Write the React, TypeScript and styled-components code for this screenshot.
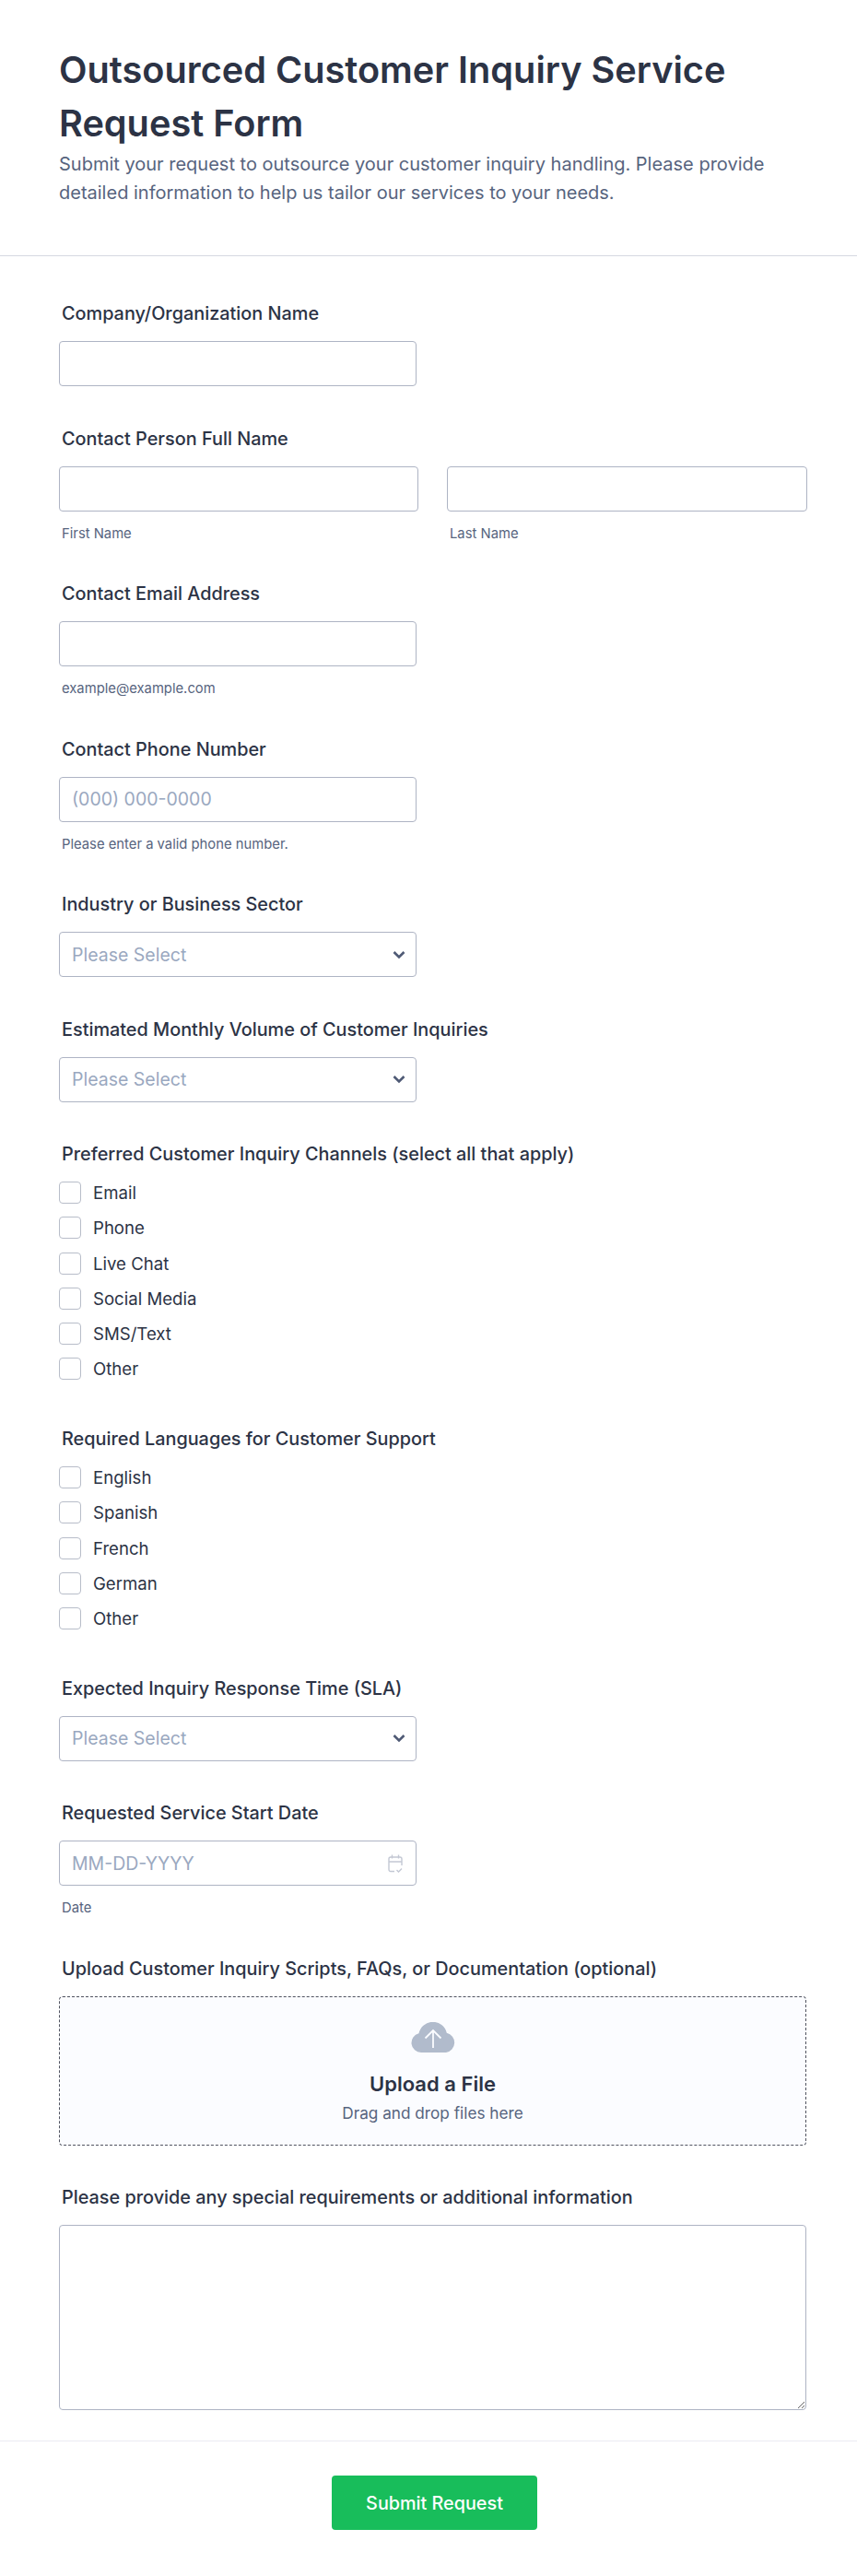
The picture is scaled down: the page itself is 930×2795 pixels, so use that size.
import React from "react";
import styled, { createGlobalStyle } from "styled-components";

const Global = createGlobalStyle`
  html, body { margin: 0; padding: 0; background: #fff; }
  * { box-sizing: border-box; }
  body { font-family: Inter, "Liberation Sans", sans-serif; color: #2c3345; }
`;

const Page = styled.form`
  width: 930px;
  height: 2795px;
  overflow: hidden;
  background: #fff;
  display: flex;
  flex-direction: column;
`;

const Header = styled.header`
  flex: none;
  height: 278px;
  padding: 47px 64px 0;
  border-bottom: 1px solid #d5d8e1;
`;

const Title = styled.h1`
  margin: 0;
  font-size: 39.7px;
  line-height: 58px;
  font-weight: 600;
  color: #2c3345;
`;

const Subtitle = styled.p`
  margin: 0;
  font-size: 20px;
  line-height: 31px;
  font-weight: 400;
  color: #57647e;
`;

const Body = styled.div`
  flex: none;
  padding: 50px 54px 0 64px;
  display: flex;
  flex-direction: column;
`;

const Section = styled.section`
  margin-bottom: 44.5px;
  &:last-child { margin-bottom: 20px; }
`;

const Label = styled.label`
  display: block;
  margin: 0 0 18px 3px;
  font-size: 19.85px;
  line-height: 24px;
  font-weight: 500;
  color: #2c3345;
`;

const Row = styled.div`
  display: grid;
  grid-template-columns: 390px 391px;
  gap: 31px;
`;

const controlBase = `
  display: block;
  height: 49px;
  border: 1px solid #aeb4c4;
  border-radius: 4px;
  background: #fff;
  font-family: Inter, "Liberation Sans", sans-serif;
  font-size: 19.5px;
  color: #9aa8bf;
  outline: none;
`;

const TextInput = styled.input<{ $full?: boolean }>`
  ${controlBase}
  width: ${(p) => (p.$full ? "100%" : "388px")};
  padding: 0 13px;
  &::placeholder { color: #9aa8bf; opacity: 1; }
`;

const SubLabel = styled.div`
  margin: 15px 0 0 3px;
  font-size: 14.8px;
  line-height: 18px;
  color: #57647e;
`;

const FieldWrap = styled.div`
  position: relative;
  width: 388px;
`;

const Select = styled.select`
  ${controlBase}
  width: 100%;
  padding: 0 13px;
  appearance: none;
`;

const OverIcon = styled.span<{ $right: number }>`
  position: absolute;
  right: ${(p) => p.$right}px;
  top: 50%;
  transform: translateY(-50%);
  display: flex;
  pointer-events: none;
`;

const CheckList = styled.div`
  display: flex;
  flex-direction: column;
  gap: 14.3px;
  margin: 2px 0 7px;
`;

const CheckRow = styled.label`
  display: flex;
  align-items: center;
  gap: 13px;
  height: 24px;
  font-size: 18.6px;
  color: #2c3345;
`;

const CheckBox = styled.input.attrs({ type: "checkbox" })`
  appearance: none;
  width: 24px;
  height: 24px;
  margin: 0;
  border: 1px solid #b8bdc9;
  border-radius: 4px;
  background: #fff;
`;

const Drop = styled.div`
  height: 162px;
  width: 811px;
  border: 1px dashed #50535f;
  border-radius: 4px;
  background: #fbfcff;
  display: flex;
  flex-direction: column;
  align-items: center;
  padding-top: 27px;
`;

const DropTitle = styled.div`
  margin-top: 19px;
  font-size: 22px;
  line-height: 30px;
  font-weight: 600;
  color: #2c3345;
`;

const DropSub = styled.div`
  margin-top: 5px;
  font-size: 17.2px;
  line-height: 24px;
  color: #57647e;
`;

const TextArea = styled.textarea`
  ${controlBase}
  width: 811px;
  height: 201px;
  padding: 8px 12px;
`;

const Footer = styled.footer`
  flex: none;
  margin-top: auto;
  height: 147px;
  border-top: 1px solid #eaebf2;
  display: flex;
  justify-content: center;
  padding: 37px 0 0 13px;
`;

const Submit = styled.button`
  width: 223px;
  height: 59px;
  border: none;
  border-radius: 4px;
  background: #18bd5b;
  color: #fff;
  font-family: Inter, "Liberation Sans", sans-serif;
  font-size: 19.8px;
  font-weight: 500;
`;

const Chevron = () => (
  <svg width="14" height="10" viewBox="0 0 14 10" fill="none">
    <path d="M1.500 2l5.500 5.500L12.500 2" stroke="#4f5a75" strokeWidth="2.600" />
  </svg>
);

const CalendarIcon = () => (
  <svg width="16" height="20" viewBox="0 0 16 20" fill="none" stroke="#c3c8d4" strokeWidth="1.400">
    <path d="M7 18.500H3A2 2 0 0 1 1 16.500V5A2 2 0 0 1 3 3H13A2 2 0 0 1 15 5V12" />
    <path d="M1 8H15M4.500 .500V4.500M11.500 .500V4.500" />
    <path d="M9.500 17l2 2 3.500-3.500" />
  </svg>
);

const CloudIcon = () => (
  <svg width="48" height="33" viewBox="0 0 48 33">
    <path
      d="M11 33A10.500 10.500 0 0 1 8.500 12.300 15.500 15.500 0 0 1 38.800 11.800 10.800 10.800 0 0 1 38 33Z"
      fill="#b1bbcc"
    />
    <path d="M24 28V9M15.500 17.500L24 9l8.500 8.500" fill="none" stroke="#fbfcff" strokeWidth="1.800" />
  </svg>
);

const SelectField = ({ label }: { label: string }) => (
  <Section>
    <Label>{label}</Label>
    <FieldWrap>
      <Select defaultValue="">
        <option value="">Please Select</option>
      </Select>
      <OverIcon $right={12}>
        <Chevron />
      </OverIcon>
    </FieldWrap>
  </Section>
);

const CheckField = ({ label, items }: { label: string; items: string[] }) => (
  <Section>
    <Label>{label}</Label>
    <CheckList>
      {items.map((item) => (
        <CheckRow key={item}>
          <CheckBox />
          {item}
        </CheckRow>
      ))}
    </CheckList>
  </Section>
);

export default function App() {
  return (
    <Page>
      <Global />
      <Header>
        <Title>Outsourced Customer Inquiry Service Request Form</Title>
        <Subtitle>
          Submit your request to outsource your customer inquiry handling. Please provide detailed
          information to help us tailor our services to your needs.
        </Subtitle>
      </Header>
      <Body>
        <Section>
          <Label>Company/Organization Name</Label>
          <TextInput />
        </Section>
        <Section>
          <Label>Contact Person Full Name</Label>
          <Row>
            <div>
              <TextInput $full />
              <SubLabel>First Name</SubLabel>
            </div>
            <div>
              <TextInput $full />
              <SubLabel>Last Name</SubLabel>
            </div>
          </Row>
        </Section>
        <Section>
          <Label>Contact Email Address</Label>
          <TextInput />
          <SubLabel>example@example.com</SubLabel>
        </Section>
        <Section>
          <Label>Contact Phone Number</Label>
          <TextInput placeholder="(000) 000-0000" />
          <SubLabel>Please enter a valid phone number.</SubLabel>
        </Section>
        <SelectField label="Industry or Business Sector" />
        <SelectField label="Estimated Monthly Volume of Customer Inquiries" />
        <CheckField
          label="Preferred Customer Inquiry Channels (select all that apply)"
          items={["Email", "Phone", "Live Chat", "Social Media", "SMS/Text", "Other"]}
        />
        <CheckField
          label="Required Languages for Customer Support"
          items={["English", "Spanish", "French", "German", "Other"]}
        />
        <SelectField label="Expected Inquiry Response Time (SLA)" />
        <Section>
          <Label>Requested Service Start Date</Label>
          <FieldWrap>
            <TextInput $full placeholder="MM-DD-YYYY" />
            <OverIcon $right={15}>
              <CalendarIcon />
            </OverIcon>
          </FieldWrap>
          <SubLabel>Date</SubLabel>
        </Section>
        <Section>
          <Label>Upload Customer Inquiry Scripts, FAQs, or Documentation (optional)</Label>
          <Drop>
            <CloudIcon />
            <DropTitle>Upload a File</DropTitle>
            <DropSub>Drag and drop files here</DropSub>
          </Drop>
        </Section>
        <Section>
          <Label>Please provide any special requirements or additional information</Label>
          <TextArea />
        </Section>
      </Body>
      <Footer>
        <Submit type="button">Submit Request</Submit>
      </Footer>
    </Page>
  );
}
